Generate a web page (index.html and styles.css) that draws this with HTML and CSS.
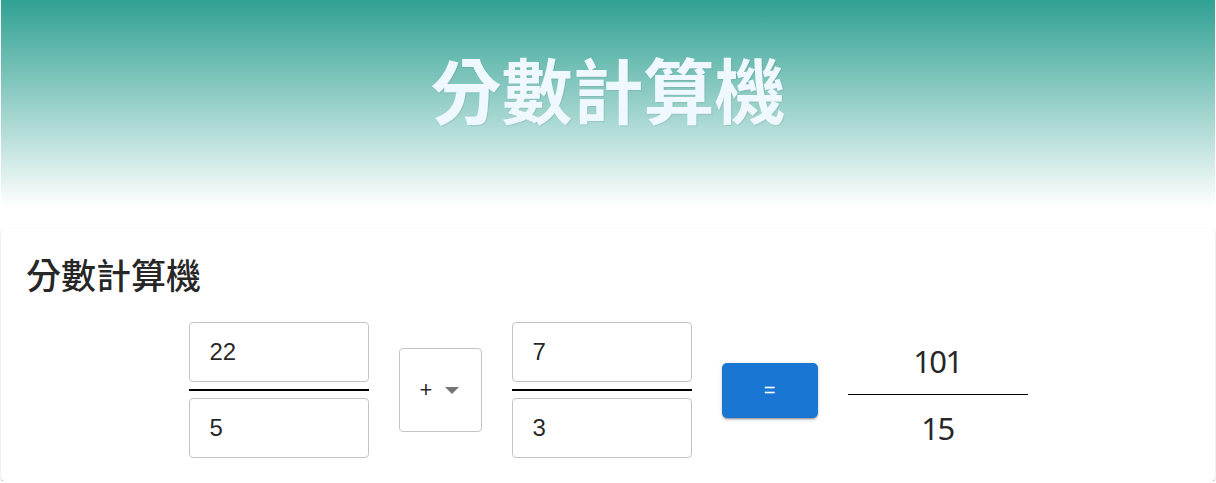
FILE: index.html
```html
<!DOCTYPE html>
<html lang="zh-Hant">
<head>
<meta charset="utf-8">
<title>分數計算機</title>
<link rel="stylesheet" href="styles.css">
</head>
<body>
<header class="hero">
  <h1 class="hero-title">分數計算機</h1>
</header>
<main class="card">
  <h2 class="card-title">分數計算機</h2>
  <div class="calc-row">
    <div class="fraction">
      <div class="field"><input class="field-input" type="text" value="22"></div>
      <div class="fraction-bar"></div>
      <div class="field"><input class="field-input" type="text" value="5"></div>
    </div>
    <div class="op-select">
      <span class="op-value">+</span>
      <span class="op-arrow"></span>
    </div>
    <div class="fraction">
      <div class="field"><input class="field-input" type="text" value="7"></div>
      <div class="fraction-bar"></div>
      <div class="field"><input class="field-input" type="text" value="3"></div>
    </div>
    <button class="equals-btn" type="button">=</button>
    <div class="result">
      <div class="result-num">101</div>
      <div class="result-bar"></div>
      <div class="result-num">15</div>
    </div>
  </div>
</main>
</body>
</html>
```

FILE: styles.css
```css
* { box-sizing: border-box; }

html, body {
  margin: 0;
  padding: 0;
  background: #ffffff;
}

body {
  padding: 0 1px;
  font-family: "Noto Sans CJK TC", "Noto Sans", sans-serif;
  color: rgba(0, 0, 0, 0.87);
}

.hero {
  height: 208px;
  background: linear-gradient(to bottom, #30a193 0%, #ffffff 100%);
  display: flex;
  align-items: center;
  justify-content: center;
  padding-bottom: 34px;
}

.hero-title {
  margin: 0;
  font-family: "Noto Sans CJK TC", sans-serif;
  font-size: 71px;
  font-weight: 700;
  line-height: 1;
  color: #f0f8ff;
  text-shadow: 1px 1px 1px rgba(0, 0, 0, 0.08);
}

.card {
  margin-top: 21px;
  background: #ffffff;
  border-radius: 4px;
  box-shadow: 0 2px 1px -1px rgba(0,0,0,0.2), 0 1px 1px 0 rgba(0,0,0,0.14), 0 1px 3px 0 rgba(0,0,0,0.12);
  padding: 24px 24px 23px;
}

.card-title {
  margin: 0 0 27px 1px;
  font-family: "Noto Sans CJK TC", sans-serif;
  font-size: 35px;
  font-weight: 500;
  line-height: 42px;
  color: rgba(0, 0, 0, 0.87);
}

.calc-row {
  display: flex;
  align-items: center;
  justify-content: center;
  gap: 30px;
}

.fraction {
  width: 180px;
  display: flex;
  flex-direction: column;
}

.field {
  height: 60px;
  border: 1px solid #c4c4c4;
  border-radius: 4px;
  display: flex;
  align-items: center;
}

.field-input {
  width: 100%;
  border: 0;
  outline: none;
  background: transparent;
  padding: 0 0 0 20px;
  font-family: "Liberation Sans", Arial, sans-serif;
  font-size: 24px;
  color: rgba(0, 0, 0, 0.87);
}

.fraction-bar {
  height: 2px;
  background: #000000;
  margin: 7px 0;
}

.op-select {
  width: 83px;
  height: 84px;
  border: 1px solid #c4c4c4;
  border-radius: 4px;
  display: flex;
  align-items: center;
  padding-left: 20px;
  gap: 13px;
}

.op-value {
  font-family: "Liberation Sans", Arial, sans-serif;
  font-size: 22px;
  line-height: 1;
  color: rgba(0, 0, 0, 0.87);
}

.op-arrow {
  width: 0;
  height: 0;
  border-left: 7.5px solid transparent;
  border-right: 7.5px solid transparent;
  border-top: 7px solid #757575;
}

.equals-btn {
  width: 96px;
  height: 55px;
  border: 0;
  border-radius: 5px;
  background: #1976d2;
  color: #ffffff;
  font-family: "Liberation Sans", Arial, sans-serif;
  font-size: 20px;
  font-weight: 500;
  box-shadow: 0 3px 1px -2px rgba(0,0,0,0.2), 0 2px 2px 0 rgba(0,0,0,0.14), 0 1px 5px 0 rgba(0,0,0,0.12);
  padding: 0;
}

.result {
  width: 180px;
  display: flex;
  flex-direction: column;
  align-items: center;
  padding-top: 8px;
}

.result-num {
  font-family: "Noto Sans", sans-serif;
  font-size: 31px;
  letter-spacing: -1.5px;
  line-height: 44px;
  color: rgba(0, 0, 0, 0.87);
}

.result-bar {
  width: 180px;
  height: 1px;
  background: #000000;
  margin: 11px 0 11px;
}
```
